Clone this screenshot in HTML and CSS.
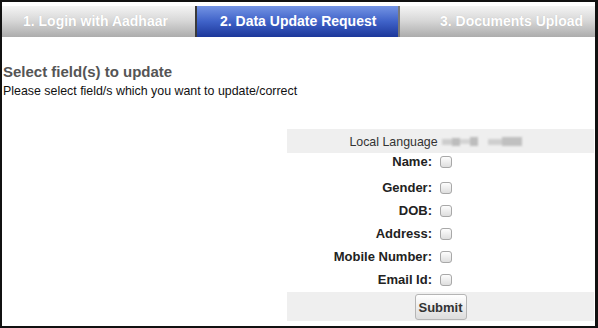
FILE: index.html
```html
<!DOCTYPE html>
<html>
<head>
<meta charset="utf-8">
<link rel="stylesheet" href="styles.css">
</head>
<body>
<div class="frame">
  <div class="tabs">
    <div class="tab tab-off tab-1">1. Login with Aadhaar</div>
    <div class="tab tab-on tab-2">2. Data Update Request</div>
    <div class="tab tab-off tab-3">3. Documents Upload</div>
  </div>
  <h2 class="title">Select field(s) to update</h2>
  <p class="sub">Please select field/s which you want to update/correct</p>
  <div class="formwrap">
    <table class="fields">
      <tr class="row-gray row-lang">
        <td colspan="2" class="center">
          <span class="lang-label">Local Language</span><span class="blur"><i class="b1"></i><i class="b2"></i><i class="b3"></i><i class="b4"></i><i class="b5"></i><i class="b6"></i><i class="b7"></i></span>
        </td>
      </tr>
      <tr class="row-name"><td class="lbl">Name:</td><td class="chk"><span class="box"></span></td></tr>
      <tr class="row"><td class="lbl">Gender:</td><td class="chk"><span class="box"></span></td></tr>
      <tr class="row"><td class="lbl">DOB:</td><td class="chk"><span class="box"></span></td></tr>
      <tr class="row"><td class="lbl">Address:</td><td class="chk"><span class="box"></span></td></tr>
      <tr class="row"><td class="lbl">Mobile Number:</td><td class="chk"><span class="box"></span></td></tr>
      <tr class="row"><td class="lbl">Email Id:</td><td class="chk"><span class="box"></span></td></tr>
      <tr class="row-gap"><td colspan="2"></td></tr>
      <tr class="row-gray row-submit">
        <td colspan="2" class="center"><button class="submit">Submit</button></td>
      </tr>
    </table>
  </div>
</div>
</body>
</html>
```

FILE: styles.css
```css
html, body {
  margin: 0;
  padding: 0;
  background: #fff;
}
.frame {
  box-sizing: border-box;
  width: 598px;
  height: 328px;
  border-style: solid;
  border-color: #111;
  border-width: 2px 3px 2px 2px;
  font-family: "Liberation Sans", Arial, sans-serif;
  overflow: hidden;
}
.tabs {
  display: flex;
  margin-top: 4px;
  height: 31px;
}
.tab {
  box-sizing: border-box;
  height: 31px;
  line-height: 31px;
  font-size: 14px;
  font-weight: bold;
  color: #fff;
  white-space: nowrap;
}
.tab-off {
  background: linear-gradient(to bottom, #f4f4f4 0%, #d9d9d9 45%, #acacac 100%);
  text-shadow: 0 0 1px rgba(0,0,0,0.15);
}
.tab-on {
  background: linear-gradient(to bottom, #7494e4 0%, #3f62c8 50%, #1c379a 100%);
  border-left: 2px solid #3a3a3a;
  border-right: 2px solid #7a7a7a;
}
.tab-1 {
  width: 193px;
  padding-left: 21px;
}
.tab-2 {
  width: 205px;
  padding-left: 23px;
}
.tab-3 {
  flex: 1;
  padding-left: 40px;
}
.title {
  margin: 26px 0 0 1px;
  font-size: 15px;
  line-height: 18px;
  font-weight: bold;
  color: #555;
}
.sub {
  margin: 3px 0 0 1px;
  font-size: 12.4px;
  line-height: 14px;
  color: #111;
}
.formwrap {
  display: flex;
  justify-content: flex-end;
  padding-right: 1px;
  margin-top: 31px;
}
.fields {
  width: 307px;
  border-collapse: collapse;
  font-size: 13px;
}
.fields td {
  padding: 0;
}
.row-gray td {
  background: #efefef;
}
.row-lang td {
  height: 24px;
  color: #333;
}
.center {
  text-align: center;
}
.lang-label {
  vertical-align: middle;
  font-size: 12.4px;
}
.blur {
  display: inline-flex;
  align-items: center;
  vertical-align: middle;
  width: 80px;
  margin-left: 4px;
  margin-right: 10px;
  height: 12px;
  filter: blur(0.8px);
}
.blur i {
  display: block;
  height: 8px;
  background: #c6c6c6;
}
.blur .b1 { width: 10px; background: #cdcdcd; height: 6px; }
.blur .b2 { width: 8px; background: #bcbcbc; height: 8px; }
.blur .b3 { width: 10px; background: #d4d4d4; height: 5px; }
.blur .b4 { width: 8px; background: #bdbdbd; height: 9px; }
.blur .b5 { width: 10px; background: #efefef; }
.blur .b6 { width: 14px; background: #cfcfcf; height: 6px; }
.blur .b7 { width: 20px; background: #c0c0c0; height: 9px; }
.lbl {
  width: 145px;
  text-align: right;
  font-weight: bold;
  color: #222;
  padding-right: 4px !important;
}
.chk {
  text-align: left;
}
.row-name td {
  height: 22px;
  vertical-align: top;
  padding-top: 1px !important;
}
.row td {
  height: 23px;
  vertical-align: middle;
}
.row-gap td {
  height: 1px;
}
.box {
  display: inline-block;
  box-sizing: border-box;
  width: 12px;
  height: 12px;
  margin-left: 4px;
  border: 1px solid #a8a8a8;
  border-radius: 3px;
  background: linear-gradient(to bottom, #fdfdfd, #dedede);
  vertical-align: -2px;
}
.row-submit td {
  height: 29px;
}
.submit {
  box-sizing: border-box;
  width: 52px;
  height: 26px;
  margin: 1px 0 0 0;
  padding: 0;
  font-family: "Liberation Sans", Arial, sans-serif;
  font-size: 13px;
  font-weight: bold;
  color: #333;
  border: 1px solid #b5b5b5;
  border-radius: 3px;
  background: linear-gradient(to bottom, #ffffff, #dcdcdc);
  vertical-align: top;
}
```
